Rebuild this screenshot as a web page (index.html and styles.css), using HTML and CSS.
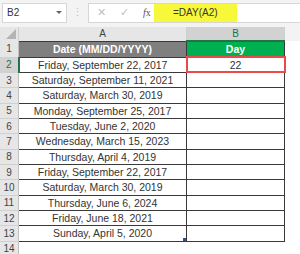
FILE: index.html
```html
<!DOCTYPE html>
<html lang="en">
<head>
  <meta charset="UTF-8" />
  <title>DAY function</title>
  <link rel="stylesheet" href="styles.css">
</head>
<body>

<div class="toolbar">
  <div class="namebox">
    <span>B2</span>
    <span class="arrow"></span>
  </div>
  <div class="dots">&#8942;</div>
  <div class="formula">
    <span class="icon cancel">&#10005;</span>
    <span class="icon enter">&#10003;</span>
    <span class="icon fx"><i>f</i>x</span>
    <span class="entry">=DAY(A2)</span>
  </div>
</div>

<table class="sheet">
  <tr class="colhead">
    <th class="corner"><span class="tri"></span></th>
    <th>A</th>
    <th class="active-col">B</th>
    <th class="blank"></th>
  </tr>
  <tr>
    <th class="rh">1</th>
    <td class="hdr-date">Date (MM/DD/YYYY)</td>
    <td class="hdr-day">Day</td>
    <td class="out"></td>
  </tr>
  <tr>
    <th class="rh active-row">2</th>
    <td>Friday, September 22, 2017</td>
    <td class="selected">22</td>
    <td class="out"></td>
  </tr>
  <tr><th class="rh">3</th><td>Saturday, September 11, 2021</td><td></td><td class="out"></td></tr>
  <tr><th class="rh">4</th><td>Saturday, March 30, 2019</td><td></td><td class="out"></td></tr>
  <tr><th class="rh">5</th><td>Monday, September 25, 2017</td><td></td><td class="out"></td></tr>
  <tr><th class="rh">6</th><td>Tuesday, June 2, 2020</td><td></td><td class="out"></td></tr>
  <tr><th class="rh">7</th><td>Wednesday, March 15, 2023</td><td></td><td class="out"></td></tr>
  <tr><th class="rh">8</th><td>Thursday, April 4, 2019</td><td></td><td class="out"></td></tr>
  <tr><th class="rh">9</th><td>Friday, September 22, 2017</td><td></td><td class="out"></td></tr>
  <tr><th class="rh">10</th><td>Saturday, March 30, 2019</td><td></td><td class="out"></td></tr>
  <tr><th class="rh">11</th><td>Thursday, June 6, 2024</td><td></td><td class="out"></td></tr>
  <tr><th class="rh">12</th><td>Friday, June 18, 2021</td><td></td><td class="out"></td></tr>
  <tr><th class="rh">13</th><td class="handle">Sunday, April 5, 2020</td><td></td><td class="out"></td></tr>
  <tr class="empty"><th class="rh">14</th><td></td><td></td><td class="out"></td></tr>
</table>

</body>
</html>
```

FILE: styles.css
```css
body {
  margin: 0;
  width: 300px;
  height: 254px;
  overflow: hidden;
  background: #f3f3f3;
  font-family: "Liberation Sans", Arial, sans-serif;
  color: #333;
}
.toolbar {
  display: flex;
  align-items: center;
  height: 25px;
  padding: 0 0 0 2px;
  box-sizing: border-box;
}
.namebox {
  display: flex;
  align-items: center;
  justify-content: space-between;
  width: 65px;
  height: 20px;
  box-sizing: border-box;
  background: #fff;
  border: 1px solid #d6d6d6;
  padding: 0 4px 0 4px;
  font-size: 10px;
  color: #333;
}
.arrow {
  width: 0;
  height: 0;
  border-left: 3px solid transparent;
  border-right: 3px solid transparent;
  border-top: 3px solid #666;
}
.dots {
  width: 21px;
  text-align: center;
  color: #c4c4c4;
  font-size: 11px;
}
.formula {
  flex: 1;
  display: flex;
  align-items: center;
  height: 20px;
  box-sizing: border-box;
  background: #fff;
  border: 1px solid #d6d6d6;
  border-right: none;
  padding-left: 8px;
}
.icon {
  color: #c0c0c0;
  font-size: 11px;
  width: 23px;
}
.icon.fx {
  color: #555;
  font-family: "Liberation Serif", serif;
  font-size: 10px;
  width: 11px;
}
.entry {
  background: #f8f83a;
  height: 18px;
  line-height: 18px;
  width: 64px;
  padding-left: 19px;
  font-size: 10px;
  color: #333;
}
.sheet {
  border-collapse: collapse;
  table-layout: fixed;
  margin-top: 2px;
  width: 300px;
  font-size: 10.5px;
}
.sheet th,
.sheet td {
  padding: 0;
  height: 14.35px;
  text-align: center;
  white-space: nowrap;
  overflow: hidden;
}
.sheet td {
  border: 1px solid #3a3a3a;
  background: #fff;
  color: #333;
}
.colhead th {
  height: 13px;
  background: #e6e6e6;
  border-right: 1px solid #cfcfcf;
  font-weight: normal;
  color: #444;
  font-size: 10px;
}
.colhead th:nth-child(1) { width: 18px; }
.colhead th:nth-child(2) { width: 167px; }
.colhead th:nth-child(3) { width: 97px; }
.colhead .active-col {
  background: #d2d2d2;
  color: #217346;
  border-bottom: 2px solid #217346;
}
.colhead .blank {
  background: #f3f3f3;
  border-right: none;
}
.corner {
  position: relative;
}
.tri {
  position: absolute;
  right: 2px;
  bottom: 2px;
  width: 0;
  height: 0;
  border-left: 10px solid transparent;
  border-bottom: 10px solid #b4b4b4;
}
.rh {
  background: #e6e6e6;
  border-bottom: 1px solid #d0d0d0;
  border-right: 1px solid #c0c0c0;
  font-weight: normal;
  font-size: 10px;
  color: #444;
}
.rh.active-row {
  background: #d2d2d2;
  color: #217346;
  border-right: 2px solid #217346;
}
.sheet .hdr-date {
  background: #7f7f7f;
  color: #fff;
  font-weight: bold;
  height: 15px;
}
.sheet .hdr-day {
  background: #00b050;
  color: #fff;
  font-weight: bold;
}
.sheet .selected {
  outline: 2px solid #e94b4b;
  outline-offset: -1px;
}
.sheet .out {
  border: none;
  border-left: 1px solid #3a3a3a;
  background: #fff;
}
.handle {
  position: relative;
}
.handle::after {
  content: "";
  position: absolute;
  right: 0;
  bottom: 0;
  width: 3px;
  height: 3px;
  background: #2b4fa8;
}
.empty td {
  border: none;
  border-top: 1px solid #3a3a3a;
}
.empty .out {
  border-top: none;
  border-left: none;
}
```
